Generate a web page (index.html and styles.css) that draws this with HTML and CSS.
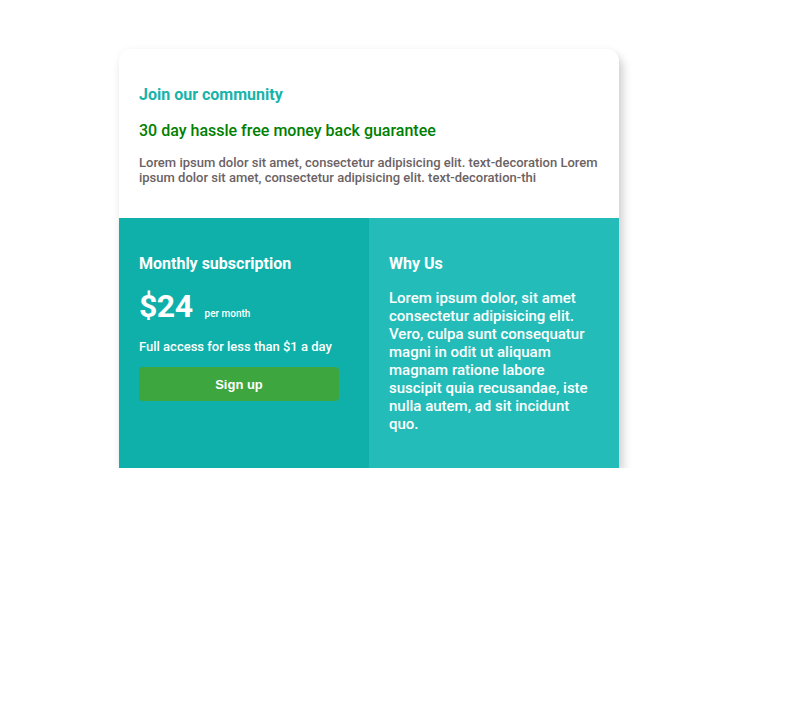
FILE: index.html
```html
<!DOCTYPE html>
<html>
<head>
<meta charset="utf-8">
<link rel="stylesheet" href="styles.css">
</head>
<body>
<div class="card">
  <div class="top">
    <h2 class="title">Join our community</h2>
    <h3 class="guarantee">30 day hassle free money back guarantee</h3>
    <p class="intro">Lorem ipsum dolor sit amet, consectetur adipisicing elit. text-decoration Lorem ipsum dolor sit amet, consectetur adipisicing elit. text-decoration-thi</p>
  </div>
  <div class="bottom">
    <div class="panel monthly">
      <h2 class="panel-title">Monthly subscription</h2>
      <div class="price"><span class="amount">$24</span><span class="per">per month</span></div>
      <p class="access">Full access for less than $1 a day</p>
      <button class="signup">Sign up</button>
    </div>
    <div class="panel why">
      <h2 class="panel-title">Why Us</h2>
      <p class="why-text">Lorem ipsum dolor, sit amet consectetur adipisicing elit. Vero, culpa sunt consequatur magni in odit ut aliquam magnam ratione labore suscipit quia recusandae, iste nulla autem, ad sit incidunt quo.</p>
    </div>
  </div>
</div>
</body>
</html>
```
FILE: styles.css
```css
* { box-sizing: border-box; }
body {
  margin: 0;
  background: #fff;
  font-family: Roboto, "Noto Sans", sans-serif;
  padding: 49px 0 0 119px;
}
.card {
  width: 500px;
  border-radius: 12px 12px 0 0;
  background: #fff;
  box-shadow: 4px 7px 10px rgba(0,0,0,0.18), 0 0 8px rgba(0,0,0,0.04);
  overflow: hidden;
}
.top {
  padding: 36px 20px 33px;
}
.title {
  margin: 0;
  font-size: 16px;
  line-height: 19px;
  font-weight: 700;
  color: #17b3aa;
}
.guarantee {
  margin: 17px 0 0;
  font-size: 16px;
  line-height: 19px;
  font-weight: 500;
  color: #008000;
}
.intro {
  margin: 15px 0 0;
  font-size: 13px;
  line-height: 15px;
  font-weight: 500;
  color: #6b6264;
}
.bottom {
  display: flex;
  height: 250px;
}
.panel {
  flex: 1;
  padding: 36px 20px 0;
  color: #fff;
}
.monthly { background: #0eb0a9; }
.why { background: #24bcb8; }
.panel-title {
  margin: 0;
  font-size: 16px;
  line-height: 19px;
  font-weight: 700;
}
.price {
  margin-top: 15px;
  display: flex;
  align-items: baseline;
  height: 37px;
}
.amount {
  font-size: 32px;
  line-height: 37px;
  font-weight: 700;
  letter-spacing: -0.5px;
}
.per {
  font-size: 10px;
  font-weight: 500;
  margin-left: 12px;
}
.access {
  margin: 14px 0 0;
  font-size: 13px;
  line-height: 16px;
  font-weight: 500;
}
.signup {
  display: block;
  margin-top: 12px;
  width: 200px;
  height: 34px;
  border: none;
  border-radius: 4px;
  background: #3ea63e;
  color: #fff;
  font-family: "Liberation Sans", Arial, sans-serif;
  font-weight: 700;
  font-size: 13px;
}
.why-text {
  margin: 16px 0 0;
  font-size: 15px;
  line-height: 18px;
  font-weight: 500;
}
```
